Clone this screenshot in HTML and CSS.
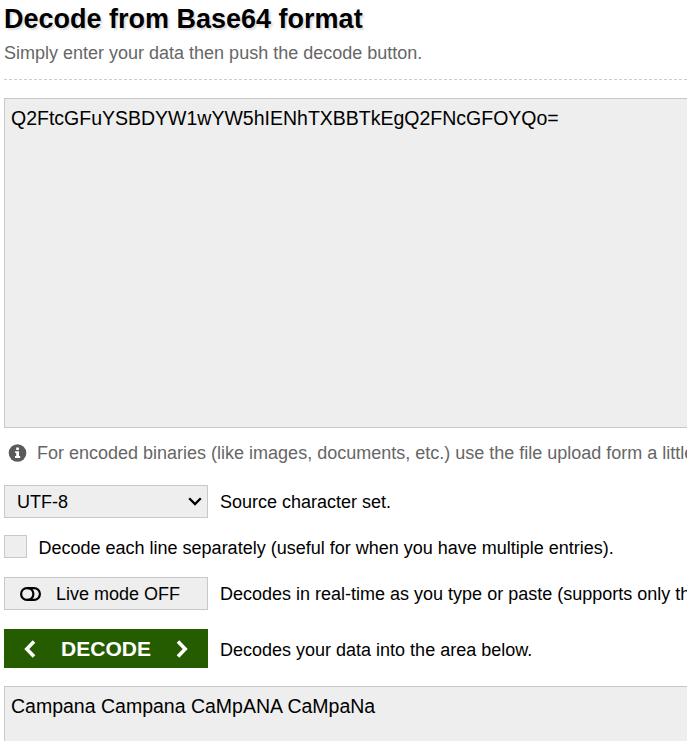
FILE: index.html
```html
<!DOCTYPE html>
<html lang="en">
<head>
<meta charset="utf-8">
<title>Base64 Decode</title>
<link rel="stylesheet" href="styles.css">
</head>
<body>
<main class="page">
  <h1 class="title">Decode from Base64 format</h1>
  <p class="subtitle">Simply enter your data then push the decode button.</p>
  <div class="box input">Q2FtcGFuYSBDYW1wYW5hIENhTXBBTkEgQ2FNcGFOYQo=</div>
  <p class="note"><svg class="info" viewBox="-0.5 0 19 18"><circle cx="9" cy="9" r="8.8" fill="#5a5a5a"/><path d="M7.7 3.4h2.7v2.5H7.7zM6.6 7.2h3.9v4.7h1.2v2H6.5v-2h1.2V9.1H6.6z" fill="#fff"/></svg><span>For encoded binaries (like images, documents, etc.) use the file upload form a little</span></p>
  <div class="row charset">
    <div class="control select"><span>UTF-8</span><svg class="caret" viewBox="0 0 14 9"><path d="M1.2 1.2L7 7l5.8-5.8" fill="none" stroke="#000" stroke-width="2.3"/></svg></div>
    <span>Source character set.</span>
  </div>
  <div class="row lines"><span class="check"></span><span class="low">Decode each line separately (useful for when you have multiple entries).</span></div>
  <div class="row live">
    <div class="control toggle"><svg class="switch" viewBox="0 0 21 14"><g fill="none" stroke="#000" stroke-width="2.2"><rect x="1.1" y="1.1" width="18.8" height="11.8" rx="5.9"/><path d="M7.5 1.1a5.9 5.9 0 0 1 0 11.8"/></g></svg><span>Live mode OFF</span></div>
    <span>Decodes in real-time as you type or paste (supports only the</span>
  </div>
  <div class="row action">
    <div class="decode"><svg class="chevron" viewBox="0 0 12 18"><path d="M10 1.5L2.8 9l7.2 7.5" fill="none" stroke="#fff" stroke-width="3.6"/></svg><span>DECODE</span><svg class="chevron" viewBox="0 0 12 18"><path d="M2 1.5L9.2 9 2 16.5" fill="none" stroke="#fff" stroke-width="3.6"/></svg></div>
    <span class="low">Decodes your data into the area below.</span>
  </div>
  <div class="box output">Campana Campana CaMpANA CaMpaNa</div>
</main>
</body>
</html>
```
FILE: styles.css
```css
* { box-sizing: border-box; }
html, body { margin: 0; height: 741px; overflow: hidden; }
body { background: #fff; color: #000; font: 18px/22px "Liberation Sans", Arial, sans-serif; }
.page { padding-left: 4px; height: 741px; overflow: hidden; white-space: nowrap; }
.title { margin: 0; padding-top: 4px; font-size: 27px; line-height: 31px; text-shadow: 2px 2px 2px #ddd; }
.subtitle { margin: 0; padding-top: 7px; height: 45px; color: #666; border-bottom: 1px dashed #ccc; }
.box { border: 1px solid #c8c8c8; border-right: 0; background: #eee; padding: 8px 6px; font-size: 19.5px; line-height: 23px; }
.input { height: 330px; margin-top: 18px; }
.note { display: flex; align-items: center; gap: 10px; height: 22px; margin: 14px 0 0 4px; color: #666; }
.info { width: 19px; height: 18px; flex: none; }
.row { display: flex; align-items: center; gap: 12px; }
.control { width: 204px; height: 33px; flex: none; display: flex; align-items: center; border: 1px solid #c8c8c8; background: #eee; }
.charset { margin-top: 21px; }
.select { justify-content: space-between; padding: 0 5px 0 12px; }
.caret { width: 14px; height: 9px; }
.lines { margin-top: 17px; height: 23px; gap: 11.5px; }
.check { width: 23px; height: 23px; border: 1px solid #c8c8c8; background: #eee; }
.low { padding-top: 2px; }
.live { margin-top: 19px; }
.toggle { padding-left: 15px; gap: 15px; }
.switch { width: 21px; height: 14px; }
.action { margin-top: 19px; height: 39px; }
.decode { width: 204px; height: 39px; flex: none; display: flex; align-items: center; justify-content: space-between; padding: 0 20px; background: #265c00; color: #fff; font-size: 21px; font-weight: bold; }
.chevron { width: 12px; height: 18px; }
.output { margin-top: 18px; height: 55px; border-bottom: 0; }
```
